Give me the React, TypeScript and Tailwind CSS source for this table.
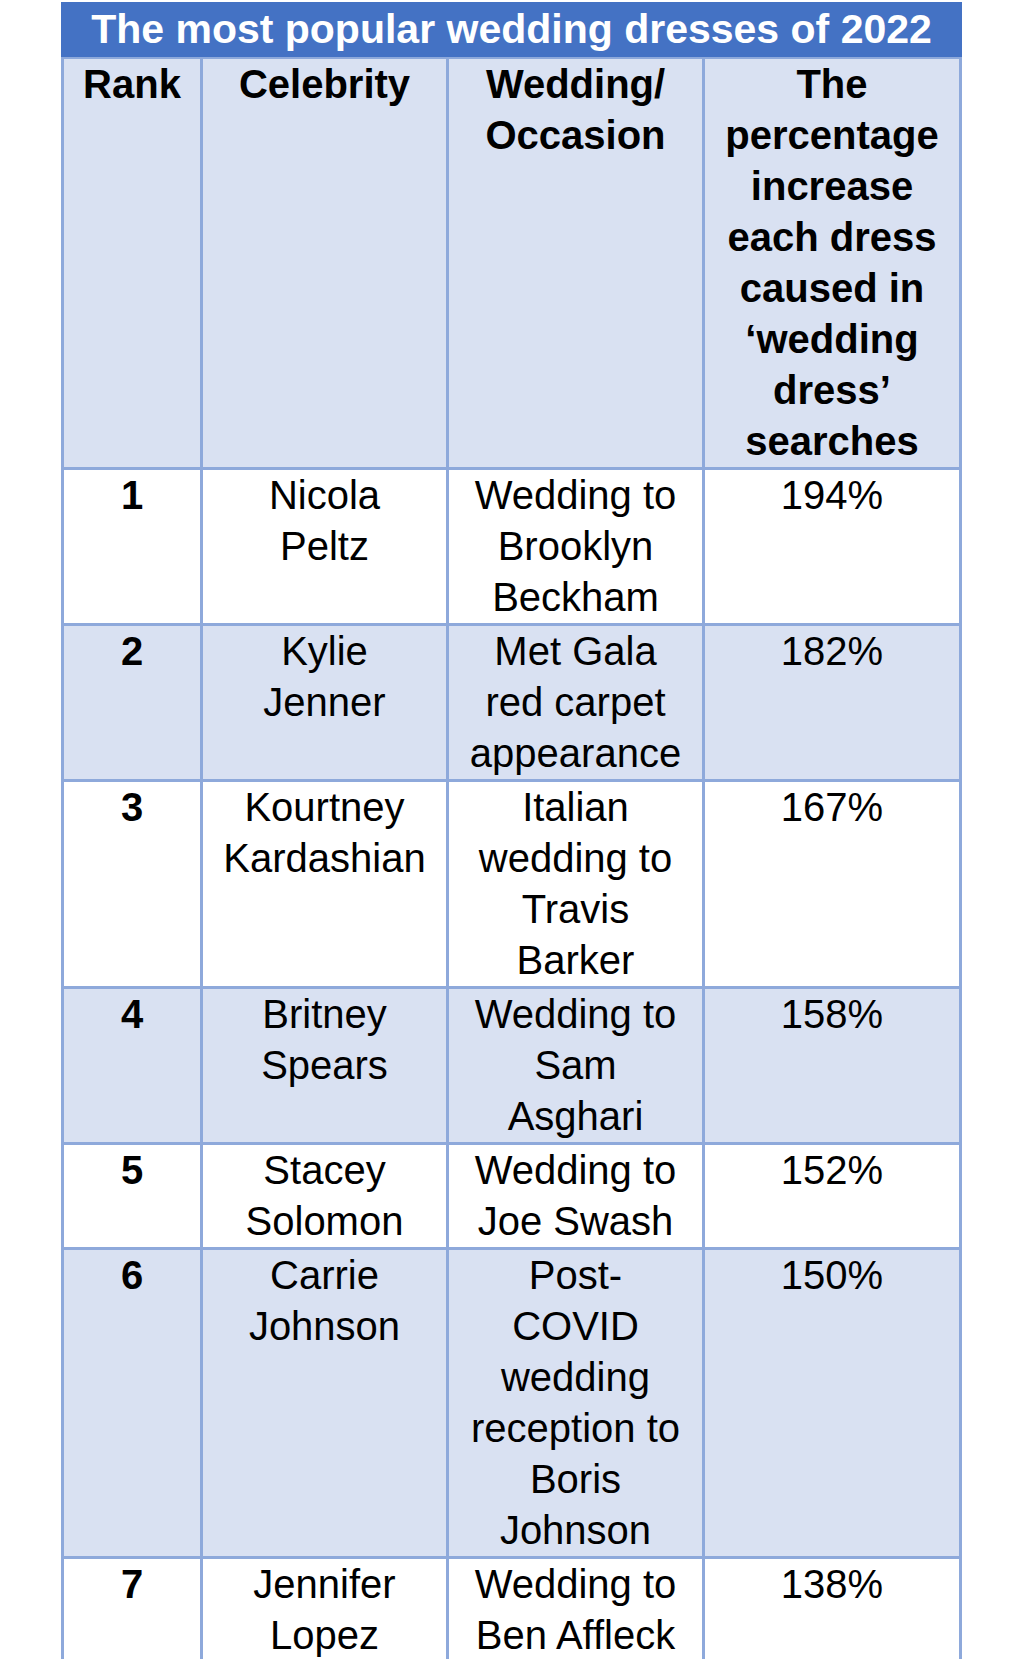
import React from "react";

type Row = { rank: string; celeb: string[]; occasion: string[]; pct: string };

const rows: Row[] = [
  { rank: "1", celeb: ["Nicola", "Peltz"], occasion: ["Wedding to", "Brooklyn", "Beckham"], pct: "194%" },
  { rank: "2", celeb: ["Kylie", "Jenner"], occasion: ["Met Gala", "red carpet", "appearance"], pct: "182%" },
  { rank: "3", celeb: ["Kourtney", "Kardashian"], occasion: ["Italian", "wedding to", "Travis", "Barker"], pct: "167%" },
  { rank: "4", celeb: ["Britney", "Spears"], occasion: ["Wedding to", "Sam", "Asghari"], pct: "158%" },
  { rank: "5", celeb: ["Stacey", "Solomon"], occasion: ["Wedding to", "Joe Swash"], pct: "152%" },
  { rank: "6", celeb: ["Carrie", "Johnson"], occasion: ["Post-", "COVID", "wedding", "reception to", "Boris", "Johnson"], pct: "150%" },
  { rank: "7", celeb: ["Jennifer", "Lopez"], occasion: ["Wedding to", "Ben Affleck"], pct: "138%" },
];

function Lines({ lines }: { lines: string[] }) {
  return (
    <>
      {lines.map((l, i) => (
        <span key={i} className="block whitespace-nowrap">
          {l}
        </span>
      ))}
    </>
  );
}

export default function App() {
  const cell = "text-center text-[40px] leading-[51px] text-black";
  return (
    <div
      className="min-h-[1659px] bg-white pt-[2px]"
      style={{ fontFamily: '"Liberation Sans", Arial, Helvetica, sans-serif' }}
    >
      <div className="ml-[61px] w-[901px] bg-[#8EA9DB] p-[3px] pt-0">
        <div className="-mx-[3px] flex h-[55px] items-center justify-center bg-[#4472C4] text-[41px] font-bold text-white">
          The most popular wedding dresses of 2022
        </div>
        <div className="grid grid-cols-[136px_243px_253px_254px] gap-[3px] pt-[2px]">
          <div className={`${cell} bg-[#D9E1F2] font-bold`}>Rank</div>
          <div className={`${cell} bg-[#D9E1F2] font-bold`}>Celebrity</div>
          <div className={`${cell} bg-[#D9E1F2] font-bold`}>
            <Lines lines={["Wedding/", "Occasion"]} />
          </div>
          <div className={`${cell} bg-[#D9E1F2] font-bold`}>
            <Lines
              lines={[
                "The",
                "percentage",
                "increase",
                "each dress",
                "caused in",
                "\u2018wedding",
                "dress\u2019",
                "searches",
              ]}
            />
          </div>
          {rows.map((r, i) => {
            const bg = i % 2 === 0 ? "bg-white" : "bg-[#D9E1F2]";
            return (
              <React.Fragment key={r.rank}>
                <div className={`${cell} ${bg} font-bold`}>{r.rank}</div>
                <div className={`${cell} ${bg}`}>
                  <Lines lines={r.celeb} />
                </div>
                <div className={`${cell} ${bg}`}>
                  <Lines lines={r.occasion} />
                </div>
                <div className={`${cell} ${bg}`}>{r.pct}</div>
              </React.Fragment>
            );
          })}
        </div>
      </div>
    </div>
  );
}
